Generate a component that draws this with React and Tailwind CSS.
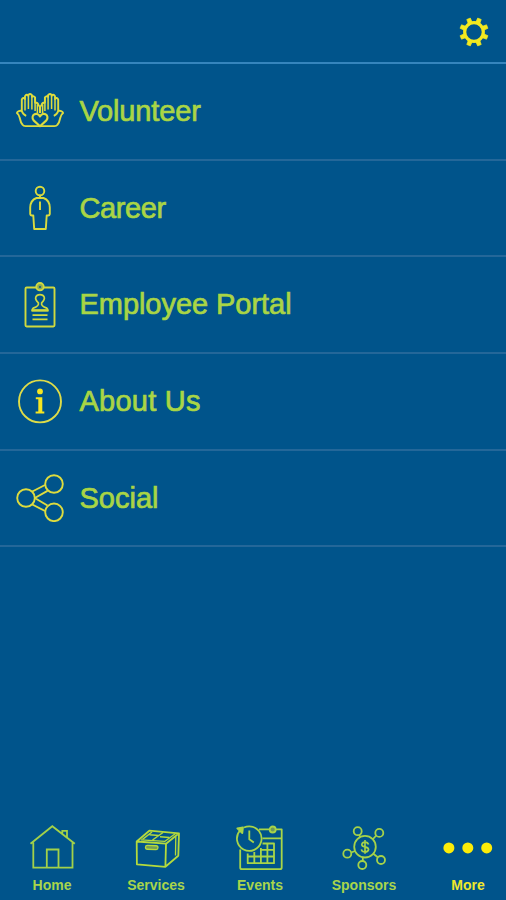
import React, { useState } from "react";

const Svg = ({ children, className, width = 1.9 }) => (
    <svg viewBox="0 0 48 48" className={"w-12 h-12 shrink-0 " + className} fill="none" stroke="currentColor" strokeWidth={width} strokeLinejoin="round">
        {children}
    </svg>
)

const Hand = () => (
    <>
        <path d="M5.8 24V12.500q1.500-2.800 3.200-.5V9.200q1.700-2.600 3.400-.4V7.800q1.800-1.800 3.500.4v1.600q1.900-1.400 3.200.8V15.500q2.600-.2 3.300 2.500L24 20V26" />
        <path strokeWidth="1.500" d="M9 12v11.500M12.400 9v13M15.900 9.500V22.500M19.100 11v13M21.400 17.500V26" />
        <path d="M5.800 24C4 23.500 1.300 24 .9 26c2.400 1.600 2.500 3 3 5.500q.8 4 2.600 6.200 1 1.400 3 1.400H24M5.800 24q1 3.500 4.400 4.800" />
    </>
)

const VolunteerIcon = () => (
    <Svg className="text-[#dedc3e]" width={1.900}>
        <Hand />
        <g transform="translate(48 0) scale(-1 1)"><Hand /></g>
        <path fill="#00548b" strokeWidth="2.100" d="M24 39.200L17.600 33.400C13.800 28.400 21 23.800 24 29.400 27 23.800 34.200 28.400 30.400 33.400z" />
    </Svg>
)

const CareerIcon = () => (
    <Svg className="text-[#d9db3e]">
        <circle cx="24" cy="7" r="4.300" />
        <path d="M24 11.500v2.500M20.500 14h7c4 1.500 6.200 5 6.300 9.500v6.500q-.2 1.500-1.700 1.500h-1.400L29.800 45H18.200L17.300 31.500H15.900q-1.500 0-1.700-1.500V23.500c.1-4.500 2.300-8 6.300-9.500zM24 17.500V26" />
    </Svg>
)

const PortalIcon = () => (
    <Svg className="text-[#d0da3e]">
        <rect x="9.500" y="6.500" width="29" height="39" rx="1.200" />
        <circle cx="24" cy="5.700" r="3.700" fill="#8caa55" />
        <circle cx="24" cy="6" r="1" fill="#00548b" stroke="none" />
        <path strokeWidth="1.700" d="M22.400 21.800c-5-4.300-2.400-8.200 1.600-8.200s6.600 3.900 1.600 8.200c-.5 2.700.8 3.800 5.200 5.300q1.200 1 1.200 2.600H16q0-1.600 1.200-2.600c4.400-1.500 5.700-2.600 5.200-5.300z" />
        <path strokeWidth="2.200" d="M16 29.300h16" />
        <path strokeWidth="1.700" d="M16.500 34.200h15M16.500 38.300h15" />
    </Svg>
)

const AboutIcon = () => (
    <Svg className="text-[#dedc48]">
        <circle cx="24" cy="24.400" r="21" />
        <g fill="#f5e622" stroke="none">
            <circle cx="24" cy="14.400" r="2.900" />
            <path d="M19.800 20.300h6.500v14.300h2v2h-8.700v-2h2.700V22.300h-2.500z" />
        </g>
    </Svg>
)

const SocialIcon = () => (
    <Svg className="text-[#dedc3e]">
        <path d="M16.300 17.500L29 11M18.800 24L31.500 16.800M18.800 24L31.500 31.500M16.300 30.500L29 37" />
        <circle cx="10" cy="24" r="8.800" />
        <circle cx="38" cy="10" r="8.800" />
        <circle cx="38" cy="38.300" r="8.800" />
    </Svg>
)

const HomeIcon = () => (
    <Svg className="text-[#a2d149]" width={1.800}>
        <path strokeLinejoin="miter" d="M5.300 18.500V43.600H44.500V18.500M2.500 19.800L24.300 2.200 46.800 19.800M18.800 43.600V25.500H30.500V43.600M34.300 10V6.800H39V13.500" />
    </Svg>
)

const ServicesIcon = () => (
    <Svg className="text-[#b4da3c]" width={1.800}>
        <path d="M4.700 17.500L34 19.700 33.400 42.800 4.900 40.300zM4.700 17.500L17.300 6.700 47 9.300 34 19.700M47 9.300L46.300 31.800 33.400 42.800" />
        <path strokeWidth="1.300" d="M9 15.800L33 17.300 43.500 9.500M43.800 12.500L43.500 31.500" />
        <path strokeWidth="1.500" d="M10.500 15.300L20 8M20.500 16L31 8.500M17.500 10.800L27 11.600M28 12.800L37.500 13.500" />
        <rect x="13.500" y="21.600" width="12.500" height="3.800" rx="1.900" fill="#739e55" strokeWidth="1.300" transform="rotate(2 20 23)" />
    </Svg>
)

const EventsIcon = () => (
    <Svg className="text-[#a8d548]" width={1.800}>
        <path d="M4.200 25.500V43.500q0 1.700 1.700 1.700H44q1.700 0 1.700-1.700V5.300H39.800M33.500 5.300H23M26.500 14.400H45.500" />
        <circle cx="36.700" cy="5.500" r="3" fill="#6f9c58" />
        <path strokeWidth="1.800" d="M11.700 29.500V39.200H38V19.500H26.500M24 25.900H38M11.700 32.500H38M18.300 28V39.200M24.900 24V39.200M31.400 19.500V39.200" />
        <path d="M4 6.500A12.300 12.300 0 1 0 13.300 2.300Q10.500 2.300 8 3.500" />
        <path d="M13.300 6.500V15.300L17.800 18.500" />
        <path fill="currentColor" d="M1.300 4.400L7 3.500 6.300 9.200z" />
    </Svg>
)

const SponsorsIcon = () => (
    <Svg className="text-[#a5d249]" width={1.800}>
        <path d="M19 11L20.500 13M36.300 11.500L33 15M11.300 28.500L15 27M37.800 33.300L33 29.500M22.800 37V33.500" />
        <circle cx="25" cy="22.700" r="10.800" />
        <circle cx="17.700" cy="7.200" r="4" />
        <circle cx="39.300" cy="8.900" r="4" />
        <circle cx="7.300" cy="29.700" r="4" />
        <circle cx="41" cy="36" r="4" />
        <circle cx="22.300" cy="41" r="4" />
        <path strokeWidth="1.600" d="M28.500 20.500q-.7-2.400-3.500-2.400t-3.200 2.300q0 2 3.200 2.500t3.600 2.600q-.4 2.400-3.600 2.400t-3.600-2.600M25 16V29.800" />
    </Svg>
)

const MoreIcon = () => (
    <Svg className="text-[#fcec08] overflow-visible">
        <g fill="currentColor" stroke="none">
            <circle cx="4.900" cy="23.900" r="5.500" />
            <circle cx="23.800" cy="23.900" r="5.500" />
            <circle cx="42.700" cy="23.900" r="5.500" />
        </g>
    </Svg>
)

const teeth = [22.5, 67.5, 112.5, 157.5, 202.5, 247.5, 292.5, 337.5]

const GearIcon = () => (
    <svg viewBox="0 0 30 30" className="w-[30px] h-[30px]" fill="none" stroke="#f3ea1f">
        <circle cx="15" cy="15" r="9.300" strokeWidth="3.200" />
        {teeth.map((x) =>
            <path key={x} d="M12.900 5L13.100.7h3.800L17.100 5z" fill="#f3ea1f" strokeWidth=".6" strokeLinejoin="round" transform={`rotate(${x} 15 15)`} />
        )}
    </svg>
)

const App = () => {
    const [active, setActive] = useState("More")

    const menuItems = [
        {id: 1, name: "Volunteer", icon: <VolunteerIcon />, tracking: "tracking-[-0.15px]"},
        {id: 2, name: "Career", icon: <CareerIcon />, tracking: "tracking-[-0.4px]"},
        {id: 3, name: "Employee Portal", icon: <PortalIcon />, tracking: "tracking-[-0.05px]"},
        {id: 4, name: "About Us", icon: <AboutIcon />, tracking: "tracking-[0.25px]"},
        {id: 5, name: "Social", icon: <SocialIcon />, tracking: "tracking-normal"},
    ]

    const tabs = [
        {name: "Home", icon: <HomeIcon />},
        {name: "Services", icon: <ServicesIcon />},
        {name: "Events", icon: <EventsIcon />},
        {name: "Sponsors", icon: <SponsorsIcon />},
        {name: "More", icon: <MoreIcon />},
    ]

    return (
        <div className="flex flex-col h-screen overflow-hidden bg-[#00548b] font-['Liberation_Sans',Arial,sans-serif]">
            <header className="flex h-16 shrink-0 items-center justify-end border-b-2 border-[#3585bd] pr-[17px] pt-0.5">
                <button aria-label="Settings"><GearIcon /></button>
            </header>

            <ul className="flex-1">
                {menuItems.map((x) =>
                    <li key={x.id} className="flex h-[96.7px] items-center border-b-2 border-[#246799] pl-4">
                        {x.icon}
                        <span className={"ml-[15.5px] text-[29px] leading-none text-[#a9d545] [-webkit-text-stroke:0.7px_#a9d545] " + x.tracking}>{x.name}</span>
                    </li>
                )}
            </ul>

            <nav className="flex h-[76px] shrink-0">
                {tabs.map((x) =>
                    <button key={x.name} onClick={() => setActive(x.name)} className="flex w-[104px] shrink-0 flex-col items-center">
                        {x.icon}
                        <span className={`mt-[5px] text-[14px] leading-4 font-bold ${active === x.name ? "text-[#efe72b]" : "text-[#a9d54b]"}`}>{x.name}</span>
                    </button>
                )}
            </nav>
        </div>
    )
}
export default App
